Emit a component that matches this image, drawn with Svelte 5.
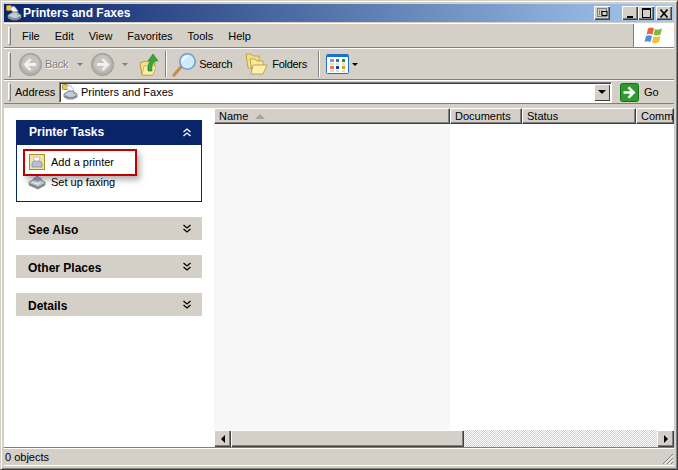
<script lang="ts">
  const menus = ['File', 'Edit', 'View', 'Favorites', 'Tools', 'Help'];
  const panes = ['See Also', 'Other Places', 'Details'];
  const columns = [
    { label: 'Name', width: 236, sorted: true },
    { label: 'Documents', width: 72 },
    { label: 'Status', width: 114 },
    { label: 'Comments', width: 38 },
  ];
</script>

{#snippet printer(size: number)}
  <svg width={size} height={size} viewBox="0 0 16 16">
    <rect x="0.5" y="0.5" width="5" height="5" rx="1" fill="#f4c842" stroke="#b08a1e" />
    <path d="M4 3l4-2 4 5-4 3z" fill="#f6f8fc" stroke="#8fa2c4" stroke-width=".7" />
    <path d="M2 10l5-3h4l4 3v3l-4 2H6l-4-2z" fill="#c3cbd3" stroke="#5f6b78" stroke-width=".8" />
    <path d="M3 11l4 2h4l3-2v2l-3 1.500H6.500L3 13z" fill="#7d8894" />
    <rect x="11" y="9" width="1.600" height="1" fill="#44c244" />
  </svg>
{/snippet}

{#snippet arrowCircle(flip: boolean)}
  <svg width="23" height="23" viewBox="0 0 23 23">
    <circle cx="11.500" cy="11.500" r="11" fill="#b3b2ad" stroke="#979791" />
    <circle cx="11.500" cy="10.500" r="8.500" fill="#c4c3bd" />
    <path
      d={flip ? 'M6 10h7.500l-3-3.200 2-1.600 6 6.300-6 6.300-2-1.600 3-3.200H6z' : 'M17 10H9.500l3-3.200-2-1.600-6 6.300 6 6.300 2-1.600-3-3.200H17z'}
      fill="#f2f1ee"
    />
  </svg>
{/snippet}

{#snippet chevrons(down: boolean, color: string)}
  <svg width="8" height="9" viewBox="0 0 8 9" fill="none" stroke={color} stroke-width="1.300">
    {#if down}
      <path d="M.5 1L4 4l3.500-3M.5 5L4 8l3.500-3" />
    {:else}
      <path d="M.5 4L4 1l3.500 3M.5 8L4 5l3.500 3" />
    {/if}
  </svg>
{/snippet}

<div class="window">
  <header class="titlebar">
    <span class="title-icon">{@render printer(16)}</span>
    <span class="title">Printers and Faxes</span>
    <button class="cap cap-media" aria-label="Media">
      <svg width="11" height="10" viewBox="0 0 11 10"><rect x=".5" y=".5" width="9" height="8" fill="none" stroke="#808080" /><path d="M2.500 2v5M4.500 2v5" stroke="#808080" /><rect x="5" y="3.500" width="5" height="4" fill="#d4d0c8" stroke="#000" /></svg>
    </button>
    <button class="cap cap-first" aria-label="Minimize">
      <svg width="10" height="10" viewBox="0 0 10 10"><rect x="2" y="8" width="6" height="2" /></svg>
    </button>
    <button class="cap" aria-label="Maximize">
      <svg width="11" height="10" viewBox="0 0 11 10" fill="none" stroke="#000"><rect x="1.500" y=".5" width="8" height="9" /><path d="M1 1.500h9" /></svg>
    </button>
    <button class="cap cap-close" aria-label="Close">
      <svg width="10" height="9" viewBox="0 0 10 9" fill="none" stroke="#000" stroke-width="1.600"><path d="M1.500 .5l7 8M8.500 .5l-7 8" /></svg>
    </button>
  </header>

  <nav class="row menubar">
    <span class="grip"></span>
    {#each menus as menu}
      <span class="menu">{menu}</span>
    {/each}
    <span class="logo">
      <svg width="20" height="19" viewBox="0 0 20 18">
        <path d="M4 2q3-2 6 0l-1.500 6q-3-1.500-6 0z" fill="#e8613a" />
        <path d="M11 2.500q3 1.500 7-.5l-1.500 6q-3 1.500-7 .5z" fill="#7cb940" />
        <path d="M2 9.500q3-1.500 6 0L6.500 15.500q-3-1.500-6 0z" fill="#4a8fdb" />
        <path d="M9.500 10q3 1 7-.5L15 15.500q-3 2-7 .5z" fill="#f2c230" />
      </svg>
    </span>
  </nav>

  <div class="row toolbar">
    <span class="grip"></span>
    <span class="tool back">{@render arrowCircle(false)}<span class="disabled">Back</span></span>
    <span class="drop drop-back"></span>
    <span class="tool forward">{@render arrowCircle(true)}</span>
    <span class="drop drop-forward"></span>
    <svg class="up" width="20" height="23" viewBox="0 0 20 23">
      <path d="M1 10l5-2 3 1h7l-2 13H3z" fill="#f6e08c" stroke="#b89a3a" />
      <path d="M3 22l2-9h12l-3 9z" fill="#fbeeaa" stroke="#c4a544" stroke-width=".7" />
      <path d="M9 18q-1-7 3-10H9l5-7 5 7h-3q-4 3-3 10z" fill="#3aa63a" stroke="#1f7a1f" stroke-width=".6" />
    </svg>
    <span class="sep"></span>
    <svg class="search-icon" width="25" height="25" viewBox="0 0 25 25">
      <path d="M2 23l7-8" stroke="#c98a46" stroke-width="3.200" stroke-linecap="round" />
      <circle cx="15.500" cy="9.500" r="7.700" fill="#cfeaf8" stroke="#6f9fc9" stroke-width="1.600" />
      <path d="M10.500 9q1-4 5-4.500" stroke="#fff" stroke-width="1.600" fill="none" />
    </svg>
    <span class="tool-label search">Search</span>
    <svg class="folders-icon" width="23" height="22" viewBox="0 0 23 22">
      <path d="M1 1h5l2 2h6v12H3z" fill="#f3dd8a" stroke="#c4a544" />
      <path d="M5 6h5l2 2h6v11H7z" fill="#f8e8a0" stroke="#c4a544" />
      <path d="M6 21l2-9h14l-4 9z" fill="#fcf0b4" stroke="#c4a544" />
    </svg>
    <span class="tool-label folders">Folders</span>
    <span class="sep sep-views"></span>
    <svg class="views-icon" width="23" height="20" viewBox="0 0 23 20">
      <rect x=".5" y=".5" width="22" height="19" rx="1" fill="#fff" stroke="#1c6fd0" />
      <rect x="1" y="1" width="21" height="2" fill="#1c6fd0" />
      <rect x="4" y="5" width="4" height="3" fill="#8f95c8" /><rect x="10" y="5" width="3" height="3" fill="#2a70c8" /><rect x="16" y="5" width="3" height="3" fill="#109a3c" />
      <path d="M4 10h4M10 10h3M16 10h3" stroke="#b8b8b8" />
      <rect x="4" y="12" width="4" height="3" fill="#ee7a50" /><rect x="10" y="12" width="3" height="3" fill="#1a3e98" /><rect x="16" y="12" width="3" height="3" fill="#d8a010" />
      <path d="M4 17h4M10 17h3M16 17h3" stroke="#b8b8b8" />
    </svg>
    <span class="drop drop-views"></span>
  </div>

  <div class="row addressbar">
    <span class="grip"></span>
    <span class="address-label">Address</span>
    <div class="address">
      <span class="address-icon">{@render printer(16)}</span>
      <span class="address-text">Printers and Faxes</span>
      <span class="combo"><span class="drop"></span></span>
    </div>
    <svg class="go-icon" width="19" height="19" viewBox="0 0 19 19">
      <rect x=".5" y=".5" width="18" height="18" rx="2" fill="#2c9a2c" stroke="#1a6e1a" />
      <path d="M3.500 8.300h7L7.500 5l2-1.500 6 6-6 6-2-1.500 3-3.300h-7z" fill="#fff" />
    </svg>
    <span class="go-label">Go</span>
  </div>

  <main class="content">
    <aside class="tasks">
      <section class="pane">
        <div class="pane-head">
          <span>Printer Tasks</span>
          {@render chevrons(false, '#fff')}
        </div>
        <div class="pane-body">
          <div class="task">
            <svg width="16" height="16" viewBox="0 0 16 16">
              <rect x=".5" y=".5" width="15" height="15" fill="#efe2a6" stroke="#b08a24" />
              <path d="M5 3h5l1 5H5z" fill="#fff" stroke="#9aa6c0" stroke-width=".6" />
              <path d="M3 9l2-2h6l2 2v4H3z" fill="#b8c0d0" stroke="#6c7688" stroke-width=".6" />
            </svg>
            <span>Add a printer</span>
          </div>
          <div class="task task-fax">
            <svg width="18" height="15" viewBox="0 0 18 15">
              <path d="M1 7l8-4 8 4v3l-7 4-9-4z" fill="#c8ced3" stroke="#69737c" stroke-width=".8" />
              <path d="M5 4l4-3 5 3-4 2z" fill="#a5a1dc" stroke="#77739f" stroke-width=".5" />
              <path d="M1.500 8l8.500 3.500L16.500 8v2L10 13.500 1.500 10z" fill="#7c868e" />
              <path d="M4 7l5 2 4-2" stroke="#fff" fill="none" />
            </svg>
            <span>Set up faxing</span>
          </div>
          <div class="callout"></div>
        </div>
      </section>
      {#each panes as pane}
        <section class="pane-closed">
          <span class="pane-label">{pane}</span>
          {@render chevrons(true, '#000')}
        </section>
      {/each}
    </aside>

    <div class="list">
      <div class="list-header">
        {#each columns as col}
          <div class="col" style="width: {col.width}px">
            <span class="col-label">{col.label}</span>
            {#if col.sorted}<span class="sort"></span>{/if}
          </div>
        {/each}
      </div>
      <div class="list-body">
        <div class="sorted-col"></div>
      </div>
      <div class="hscroll">
        <span class="sb-btn"><span class="tri-left"></span></span>
        <span class="thumb"></span>
        <span class="track"></span>
        <span class="sb-btn"><span class="tri-right"></span></span>
      </div>
    </div>
  </main>

  <footer class="status">
    <span>0 objects</span>
    <svg class="resize" width="12" height="12" viewBox="0 0 12 12" stroke-width="1">
      <path d="M11 1L1 11M11 5L5 11M11 9L9 11" stroke="#808080" />
      <path d="M11 2.500L2.500 11M11 6.500L6.500 11M11 10.500L10.500 11" stroke="#fff" />
    </svg>
  </footer>
</div>

<style>
  :global(body) {
    margin: 0;
  }
  .window {
    width: 678px;
    height: 470px;
    box-sizing: border-box;
    display: flex;
    flex-direction: column;
    padding: 3px;
    background: #d4d0c8;
    border: 1px solid;
    border-color: #d4d0c8 #404040 #404040 #d4d0c8;
    box-shadow: inset 1px 1px #fff, inset -1px -1px #808080;
    font: 11px/13px "Liberation Sans", sans-serif;
    color: #000;
    overflow: hidden;
  }
  .titlebar {
    height: 18px;
    flex: none;
    display: flex;
    align-items: center;
    background: linear-gradient(90deg, #0a246a, #a6caf0);
  }
  .title-icon {
    display: flex;
    margin: 0 1px 0 2px;
  }
  .title {
    flex: 1;
    font: bold 12px/16px "Liberation Sans", sans-serif;
    color: #fff;
  }
  .cap {
    width: 16px;
    height: 14px;
    margin: 0;
    padding: 0;
    display: flex;
    align-items: center;
    justify-content: center;
    background: #d4d0c8;
    border: none;
    box-shadow: inset 1px 1px #fff, inset -1px -1px #404040, inset -2px -2px #808080;
  }
  .cap-media {
    margin-right: 12px;
  }
  .cap-close {
    margin: 0 2px;
  }
  .row {
    flex: none;
    display: flex;
    align-items: center;
    border-top: 1px solid #fff;
    border-bottom: 1px solid #808080;
    box-sizing: border-box;
  }
  .grip {
    flex: none;
    width: 3px;
    height: 18px;
    margin-left: 4px;
    border: 1px solid;
    border-color: #fff #808080 #808080 #fff;
    box-sizing: border-box;
  }
  .menubar {
    height: 25px;
    margin-top: 1px;
  }
  .menu {
    padding: 2px 7px 0 8px;
    white-space: nowrap;
  }
  .menu:nth-child(2) {
    margin-left: 3px;
  }
  .logo {
    margin-left: auto;
    width: 40px;
    height: 23px;
    display: flex;
    align-items: center;
    justify-content: center;
    background: #fff;
    border-left: 1px solid #808080;
  }
  .toolbar {
    height: 32px;
  }
  .toolbar .grip {
    height: 25px;
  }
  .tool {
    display: flex;
    align-items: center;
  }
  .back {
    margin-left: 8px;
  }
  .back span {
    margin-left: 3px;
    letter-spacing: -0.3px;
  }
  .disabled {
    color: #808080;
    text-shadow: 1px 1px #fff;
  }
  .forward {
    margin-left: 8px;
  }
  .drop {
    display: block;
    width: 0;
    height: 0;
    border: 3px solid transparent;
    border-top: 3px solid #000;
    border-bottom: 0;
  }
  .drop-back {
    margin-left: 9px;
    border-top-color: #808080;
  }
  .drop-forward {
    margin-left: 8px;
    border-top-color: #808080;
  }
  .up {
    margin-left: 11px;
  }
  .sep {
    width: 2px;
    height: 26px;
    margin-left: 6px;
    background: linear-gradient(90deg, #808080 50%, #fff 50%);
  }
  .search-icon {
    margin-left: 5px;
  }
  .tool-label {
    margin-left: 2px;
    letter-spacing: -0.3px;
  }
  .folders-icon {
    margin-left: 13px;
  }
  .folders {
    margin-left: 4px;
  }
  .sep-views {
    margin-left: 11px;
  }
  .views-icon {
    margin-left: 6px;
  }
  .drop-views {
    margin-left: 3px;
  }
  .addressbar {
    height: 24px;
  }
  .address-label {
    margin-left: 4px;
    width: 44px;
  }
  .address {
    flex: none;
    width: 553px;
    height: 21px;
    box-sizing: border-box;
    display: flex;
    align-items: center;
    background: #fff;
    border: 1px solid;
    border-color: #808080 #fff #fff #808080;
    box-shadow: inset 1px 1px #404040;
  }
  .address-icon {
    display: flex;
    margin: 0 3px 0 2px;
  }
  .address-text {
    flex: 1;
    padding-top: 1px;
  }
  .combo {
    width: 16px;
    height: 17px;
    margin-right: 1px;
    display: flex;
    align-items: center;
    justify-content: center;
    background: #d4d0c8;
    box-shadow: inset 1px 1px #fff, inset -1px -1px #404040;
  }
  .combo .drop {
    border-width: 4px 4px 0;
  }
  .go-icon {
    margin-left: 8px;
  }
  .go-label {
    margin-left: 5px;
  }
  .content {
    flex: 1;
    min-height: 0;
    display: flex;
    margin-top: 4px;
    border-bottom: 1px solid #808080;
  }
  .tasks {
    flex: none;
    width: 210px;
    box-sizing: border-box;
    padding: 12px 12px 0;
    background: #fff;
  }
  .pane-head {
    height: 25px;
    box-sizing: border-box;
    display: flex;
    align-items: center;
    justify-content: space-between;
    padding: 0 11px 0 13px;
    background: #0a246a;
    color: #fff;
    font-weight: bold;
    font-size: 12px;
  }
  .pane-body {
    position: relative;
    height: 57px;
    box-sizing: border-box;
    padding: 8px 0 0 12px;
    border: 1px solid #0a246a;
    border-top: 0;
  }
  .task {
    display: flex;
    align-items: center;
    gap: 6px;
    height: 18px;
  }
  .task-fax {
    margin-top: 2px;
    margin-left: -1px;
    gap: 5px;
  }
  .callout {
    position: absolute;
    left: 6px;
    top: 4px;
    width: 114px;
    height: 27px;
    box-sizing: border-box;
    border: 2px solid #c00000;
    box-shadow: 3px 4px 6px rgba(0, 0, 0, 0.3);
  }
  .pane-closed {
    height: 23px;
    margin-top: 15px;
    box-sizing: border-box;
    display: flex;
    align-items: center;
    justify-content: space-between;
    padding: 0 11px 0 12px;
    background: #d4d0c8;
    font-weight: bold;
    font-size: 12px;
  }
  .pane-label {
    padding-top: 3px;
  }
  .list {
    flex: 1;
    min-width: 0;
    display: flex;
    flex-direction: column;
    background: #fff;
  }
  .list-header {
    flex: none;
    height: 16px;
    display: flex;
    overflow: hidden;
  }
  .col {
    flex: none;
    box-sizing: border-box;
    display: flex;
    align-items: center;
    padding: 1px 0 0 4px;
    white-space: nowrap;
    overflow: hidden;
    background: #d4d0c8;
    border-top: 1px solid #fff;
    border-left: 1px solid #fff;
    box-shadow: inset -1px -1px #808080;
    border-right: 1px solid #404040;
    border-bottom: 1px solid #404040;
  }
  .sort {
    margin-left: 7px;
    width: 0;
    height: 0;
    border: 5px solid transparent;
    border-top: 0;
    border-bottom: 5px solid #a8a49c;
  }
  .list-body {
    flex: 1;
    min-height: 0;
    display: flex;
  }
  .sorted-col {
    width: 236px;
    background: #f7f7f7;
  }
  .hscroll {
    flex: none;
    height: 17px;
    display: flex;
  }
  .sb-btn {
    flex: none;
    width: 17px;
    box-sizing: border-box;
    display: flex;
    align-items: center;
    justify-content: center;
    background: #d4d0c8;
    box-shadow: inset 1px 1px #fff, inset -1px -1px #404040, inset -2px -2px #808080;
  }
  .tri-left,
  .tri-right {
    width: 0;
    height: 0;
    border: 4px solid transparent;
  }
  .tri-left {
    border-left: 0;
    border-right: 4px solid #000;
  }
  .tri-right {
    border-right: 0;
    border-left: 4px solid #000;
  }
  .thumb {
    flex: none;
    width: 233px;
    background: #d4d0c8;
    box-shadow: inset 1px 1px #fff, inset -1px -1px #404040, inset -2px -2px #808080;
  }
  .track {
    flex: 1;
    background: repeating-conic-gradient(#d4d0c8 0 25%, #fff 0 50%) 0 0 / 2px 2px;
  }
  .status {
    flex: none;
    height: 18px;
    display: flex;
    align-items: center;
    justify-content: space-between;
    padding-left: 1px;
    border-top: 1px solid #fff;
    border-bottom: 1px solid #fff;
    box-sizing: border-box;
  }
  .resize {
    margin-top: 3px;
  }
</style>
